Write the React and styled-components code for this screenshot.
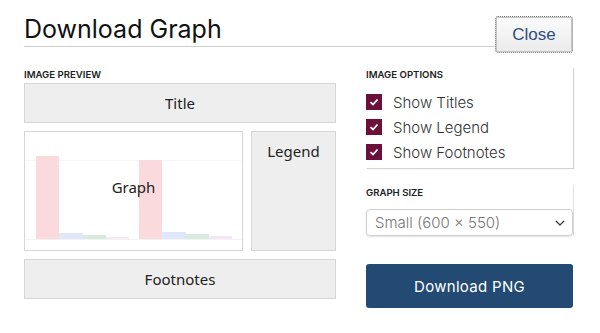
import styled, { createGlobalStyle } from "styled-components";

const GlobalStyle = createGlobalStyle`
  body {
    margin: 0;
    background: #fff;
    font-family: Inter, "Noto Sans", sans-serif;
    color: #111;
  }
`;

const Page = styled.div`
  width: 600px;
  height: 333px;
  padding: 0 27px 0 24px;
  box-sizing: border-box;
`;

const Header = styled.div`
  display: flex;
  align-items: flex-start;
`;

const Heading = styled.h2`
  flex: 1;
  margin: 0;
  height: 47px;
  box-sizing: border-box;
  padding-top: 14px;
  border-bottom: 1px solid #cfcfcf;
  font-size: 25px;
  font-weight: 400;
  line-height: 30px;
  color: #111;
`;

const CloseButton = styled.button`
  margin-top: 16px;
  width: 78px;
  height: 37px;
  border: 1px dotted #777;
  border-radius: 3px;
  background: linear-gradient(#fbfbfb, #ebebeb);
  box-shadow: 0 0 0 1px #c4c4c4 inset;
  font-family: "Liberation Sans", Arial, sans-serif;
  font-size: 17px;
  color: #2b4f7e;
`;

const Body = styled.div`
  display: grid;
  grid-template-columns: 312px 207px;
  gap: 30px;
  margin-top: 16px;
`;

const Column = styled.div`
  display: flex;
  flex-direction: column;
`;

const Label = styled.div`
  font-size: 9.6px;
  font-weight: 600;
  line-height: 11px;
  color: #222;
  text-transform: uppercase;
`;

const PreviewStack = styled.div`
  display: flex;
  flex-direction: column;
  gap: 8px;
  margin-top: 3px;
  font-family: "Noto Sans", "Open Sans", sans-serif;
  font-size: 15px;
  color: #222;
`;

const Block = styled.div`
  box-sizing: border-box;
  height: ${(p) => p.$h}px;
  border: 1px solid #d6d6d6;
  background: ${(p) => (p.$white ? "#fff" : "#eeeeee")};
  display: flex;
  justify-content: center;
  align-items: ${(p) => (p.$top ? "flex-start" : "center")};
  padding-top: ${(p) => (p.$top ? "9px" : "0")};
  position: relative;
`;

const GraphRow = styled.div`
  display: grid;
  grid-template-columns: 219px 85px;
  gap: 8px;
`;

const Chart = styled.svg`
  position: absolute;
  left: 0;
  top: 0;
`;

const GraphText = styled.span`
  position: relative;
  margin-top: -8px;
`;

const OptionsBox = styled.div`
  box-sizing: border-box;
  height: 101px;
  padding: 2px 0 0 0;
  box-shadow: 1px 1px 1px #d4d4d4;
  margin-top: -2px;
`;

const CheckList = styled.div`
  display: flex;
  flex-direction: column;
  gap: 9px;
  margin-top: 14px;
`;

const CheckRow = styled.label`
  display: flex;
  align-items: center;
  gap: 11px;
  height: 16px;
  font-size: 15px;
  font-weight: 300;
  color: #333;
`;

const Box = styled.span`
  width: 16px;
  height: 16px;
  background: #6b0f3b;
  display: flex;
  align-items: center;
  justify-content: center;
`;

const SizeBox = styled.div`
  margin-top: 17px;
  box-sizing: border-box;
  padding-top: 2px;
  box-shadow: 1px 0 0 #e2e2e2;
`;

const Select = styled.div`
  margin-top: 11px;
  height: 27px;
  box-sizing: border-box;
  border: 1px solid #cfcfcf;
  border-radius: 4px;
  box-shadow: 0 1px 2px rgba(0, 0, 0, 0.12);
  display: flex;
  align-items: center;
  justify-content: space-between;
  padding: 0 7px 0 8px;
  font-size: 15px;
  font-weight: 300;
  color: #777;
`;

const DownloadButton = styled.button`
  margin-top: 28px;
  height: 44px;
  border: none;
  border-radius: 3px;
  background: #224a73;
  color: #fff;
  font-family: Inter, sans-serif;
  font-size: 15px;
  font-weight: 400;
  letter-spacing: 0.3px;
`;

const bars = [
  { x: 11, w: 23, top: 24, c: "#fbdadd" },
  { x: 34, w: 24, top: 101, c: "#dfe7fb" },
  { x: 58, w: 23, top: 103, c: "#d9ebdf" },
  { x: 81, w: 23, top: 105, c: "#f5e8f3" },
  { x: 114, w: 23, top: 28, c: "#fbdadd" },
  { x: 137, w: 24, top: 100, c: "#dfe7fb" },
  { x: 161, w: 23, top: 102, c: "#d9ebdf" },
  { x: 184, w: 23, top: 104, c: "#f5e8f3" },
];

function Check() {
  return (
    <Box>
      <svg width="10" height="10" viewBox="0 0 10 10">
        <path d="M1.5 5.2 L4 7.5 L8.5 2.5" stroke="#fff" strokeWidth="1.8" fill="none" />
      </svg>
    </Box>
  );
}

export default function App() {
  return (
    <Page>
      <GlobalStyle />
      <Header>
        <Heading>Download Graph</Heading>
        <CloseButton>Close</CloseButton>
      </Header>
      <Body>
        <Column>
          <Label>Image Preview</Label>
          <PreviewStack>
            <Block $h={40}>Title</Block>
            <GraphRow>
              <Block $h={120} $white>
                <Chart width="217" height="118">
                  <line x1="0" x2="217" y1="28.5" y2="28.5" stroke="#f6f6f6" />
                  {bars.map((b, i) => (
                    <rect key={i} x={b.x} y={b.top} width={b.w} height={107 - b.top} fill={b.c} />
                  ))}
                  <line x1="0" x2="217" y1="107.5" y2="107.5" stroke="#f3f3f3" />
                </Chart>
                <GraphText>Graph</GraphText>
              </Block>
              <Block $h={120} $top>Legend</Block>
            </GraphRow>
            <Block $h={40}>Footnotes</Block>
          </PreviewStack>
        </Column>
        <Column>
          <OptionsBox>
            <Label>Image Options</Label>
            <CheckList>
              <CheckRow><Check />Show Titles</CheckRow>
              <CheckRow><Check />Show Legend</CheckRow>
              <CheckRow><Check />Show Footnotes</CheckRow>
            </CheckList>
          </OptionsBox>
          <SizeBox>
            <Label>Graph Size</Label>
            <Select>
              <span>Small (600 × 550)</span>
              <svg width="10" height="6" viewBox="0 0 10 6">
                <path d="M1 1 L5 5 L9 1" stroke="#444" strokeWidth="1.4" fill="none" />
              </svg>
            </Select>
          </SizeBox>
          <DownloadButton>Download PNG</DownloadButton>
        </Column>
      </Body>
    </Page>
  );
}
